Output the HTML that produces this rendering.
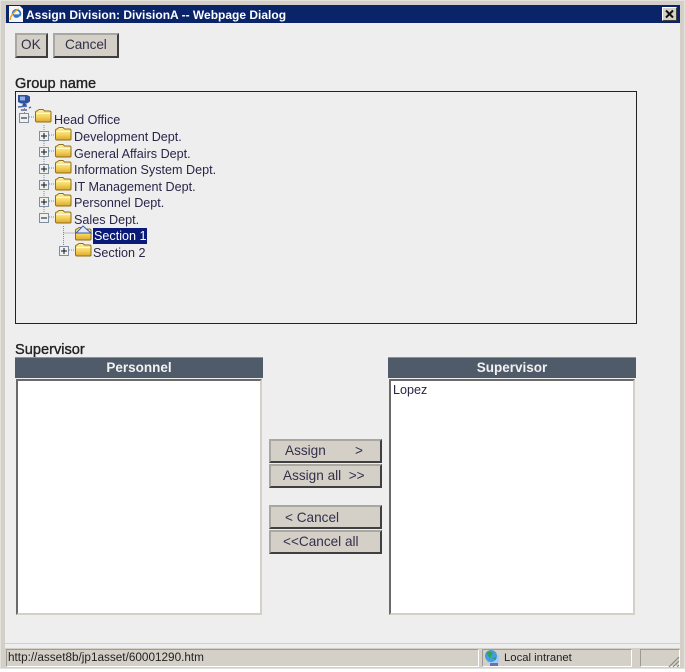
<!DOCTYPE html>
<html><head><meta charset="utf-8"><style>
html,body{margin:0;padding:0;background:#fff}
#w{position:relative;width:685px;height:672px;overflow:hidden;background:#fff;font-family:"Liberation Sans",sans-serif;color:#2a2548}
#w div{position:absolute;box-sizing:border-box}
.t{white-space:nowrap;font-size:12.6px;line-height:14px}
.b{background:#d4d0c8;border:2px solid;border-color:#a9a7a1 #3f3f3f #3f3f3f #a9a7a1;font-size:13.6px;line-height:20px;text-align:left;white-space:pre;color:#33304a}
.h{background:#4f5b69;color:#f2f2f2;font-weight:bold;font-size:13.500px;line-height:20px;text-align:center;border-top:1px solid #8a929b}
.l{background:#fff;border:2px solid;border-color:#6a6a6a #d4d0c8 #d4d0c8 #6a6a6a}
svg{position:absolute;overflow:visible}
</style></head><body><div id="w">
<div style="left:0;top:0;width:685px;height:669px;background:#d4d0c8;border:1px solid #e4e2dc"></div>
<div style="left:5px;top:23px;width:675px;height:625px;background:#eee"></div>
<div style="left:6px;top:5px;width:674px;height:18px;background:#0a246a"></div>
<svg style="left:8px;top:5px" width="16" height="18" viewBox="0 0 16 18"><path d="M1 1h11l3 3v13H1z" fill="#f6f6f6"/><path d="M5 10a3.800 3.800 0 1 1 7 .3H6.200c.4 2 3 2.300 4.800.6" fill="none" stroke="#2b78c8" stroke-width="1.800"/><path d="M2.500 15c-1-2 2.500-8 8-11" fill="none" stroke="#e8a020" stroke-width="1.500"/></svg>
<div class="t" style="left:26px;top:8px;color:#fff;font-weight:bold;font-size:12px">Assign Division: DivisionA -- Webpage Dialog</div>
<div style="left:662px;top:7px;width:15px;height:14px;background:#d4d0c8;border:1px solid;border-color:#fff #404040 #404040 #fff"></div>
<svg style="left:662px;top:7px" width="15" height="14"><path d="M4 3.500l7 7M11 3.500l-7 7" stroke="#111" stroke-width="2"/></svg>

<div class="b" style="left:15px;top:33px;width:33px;height:25px;padding-left:4px">OK</div>
<div class="b" style="left:53px;top:33px;width:66px;height:25px;padding-left:10px;letter-spacing:-.1px">Cancel</div>

<div class="t" style="left:15px;top:77px;font-size:14.600px;color:#222;-webkit-text-stroke:.35px #222">Group name</div>
<div style="left:15px;top:91px;width:622px;height:233px;border:1px solid #222"></div>

<svg style="left:17px;top:94px" width="18" height="18"><path d="M1 1h9l3 1.500v5l-3 2H4L1 8z" fill="#2f4f9f"/><rect x="3" y="2.500" width="5" height="4" fill="#8fb0e0"/><path d="M6 10l3 2" stroke="#2f4f9f" stroke-width="3"/><path d="M1 13l9-1M4 16h6M12 14l2-1" stroke="#4a6ab0" stroke-width="1.500"/></svg>

<svg style="left:0;top:0" width="300" height="270">
<defs>
<linearGradient id="g" x1="0" y1="0" x2="0" y2="1"><stop offset="0" stop-color="#fdf0a8"/><stop offset=".55" stop-color="#f6d562"/><stop offset="1" stop-color="#dca828"/></linearGradient>
<g id="f"><path d="M0.500 5v-1.500q0-1.500 1.500-1.500l2-1.500h4l1.500 1.500h5q1.500 0 1.500 1.500v8.500q0 1-1 1h-13q-1.500 0-1.500-1.500z" fill="url(#g)" stroke="#8f7018" stroke-width="1"/><path d="M1.500 4.500h14" stroke="#fff8cc" stroke-width="1.200"/></g>
<g id="p"><rect x=".5" y=".5" width="9" height="9" fill="#eef0f2" stroke="#7f8da0"/><path d="M2 5h6M5 2v6" stroke="#111"/></g>
<g id="m"><rect x=".5" y=".5" width="9" height="9" fill="#eef0f2" stroke="#7f8da0"/><path d="M2 5h6" stroke="#111"/></g>
</defs>
<path d="M24.500 108v5M44 125v88M63.500 226v20M29 117h6M49 135h6M49 151h6M49 168h6M49 184h6M49 201h6M49 217h6M63.500 233h12M69 250h6" stroke="#8a8a8a" stroke-dasharray="1 1" fill="none"/>
<use href="#m" x="19" y="113"/><use href="#f" x="35" y="109"/>
<use href="#p" x="39" y="131"/><use href="#f" x="55" y="127"/>
<use href="#p" x="39" y="147"/><use href="#f" x="55" y="144"/>
<use href="#p" x="39" y="164"/><use href="#f" x="55" y="160"/>
<use href="#p" x="39" y="180"/><use href="#f" x="55" y="177"/>
<use href="#p" x="39" y="197"/><use href="#f" x="55" y="193"/>
<use href="#m" x="39" y="213"/><use href="#f" x="55" y="210"/>
<use href="#f" x="75" y="227"/><path d="M76 233l7-7 8 7z" fill="#dfe8f8" stroke="#3a5aa0"/>
<use href="#p" x="59" y="246"/><use href="#f" x="75" y="243"/>
</svg>
<div class="t" style="left:54px;top:113px">Head Office</div>
<div class="t" style="left:74px;top:130px">Development Dept.</div>
<div class="t" style="left:74px;top:147px">General Affairs Dept.</div>
<div class="t" style="left:74px;top:163px">Information System Dept.</div>
<div class="t" style="left:74px;top:180px">IT Management Dept.</div>
<div class="t" style="left:74px;top:196px">Personnel Dept.</div>
<div class="t" style="left:74px;top:213px">Sales Dept.</div>
<div class="t" style="left:93px;top:228px;width:54px;height:16px;padding:1px 0 0 1px;background:#0a1a78;color:#fff">Section 1</div>
<div class="t" style="left:93px;top:246px">Section 2</div>

<div class="t" style="left:15px;top:343px;font-size:14.600px;color:#222;-webkit-text-stroke:.35px #222">Supervisor</div>
<div class="h" style="left:15px;top:357px;width:248px;height:21px">Personnel</div>
<div class="h" style="left:388px;top:357px;width:248px;height:21px">Supervisor</div>
<div class="l" style="left:16px;top:379px;width:246px;height:236px"></div>
<div class="l" style="left:389px;top:379px;width:246px;height:236px"></div>
<div class="t" style="left:393px;top:383px">Lopez</div>

<div class="b" style="left:269px;top:439px;width:113px;height:24px"><span style="position:absolute;left:14px">Assign</span><span style="position:absolute;left:84px">&gt;</span></div>
<div class="b" style="left:269px;top:464px;width:113px;height:24px;padding-left:12px">Assign all  &gt;&gt;</div>
<div class="b" style="left:269px;top:505px;width:113px;height:24px;padding-left:14px;line-height:21px">&lt; Cancel</div>
<div class="b" style="left:269px;top:530px;width:113px;height:24px;padding-left:12px">&lt;&lt;Cancel all</div>

<div style="left:5px;top:643px;width:675px;height:1px;background:#d4d0c8"></div>
<div style="left:5px;top:648px;width:675px;height:20px;background:#d4d0c8"></div>
<div style="left:6px;top:649px;width:473px;height:18px;border:1px solid;border-color:#9c9a94 #fff #fff #9c9a94"></div>
<div style="left:482px;top:649px;width:150px;height:18px;border:1px solid;border-color:#9c9a94 #fff #fff #9c9a94"></div>
<div style="left:640px;top:649px;width:40px;height:18px;border:1px solid;border-color:#9c9a94 #fff #fff #9c9a94"></div>
<div class="t" style="left:8px;top:651px;font-size:11.750px;color:#222">http://asset8b/jp1asset/60001290.htm</div>
<svg style="left:483px;top:649px" width="18" height="18"><rect x="4" y="6" width="12" height="8" fill="#a8c8f0"/><circle cx="8" cy="7" r="6" fill="#3f9fe0"/><path d="M3 4q4-3 7 0l-3 5zM9 9l4-1 0 3z" fill="#3aa04a"/><rect x="7" y="14" width="8" height="3" fill="#6a70b0"/></svg>
<div class="t" style="left:504px;top:651px;font-size:11.300px;color:#222">Local intranet</div>
<svg style="left:666px;top:654px" width="14" height="14"><path d="M13 3L3 13M13 7l-6 6M13 11l-2 2" stroke="#8a8880" stroke-width="1.200"/></svg>
</div></body></html>
